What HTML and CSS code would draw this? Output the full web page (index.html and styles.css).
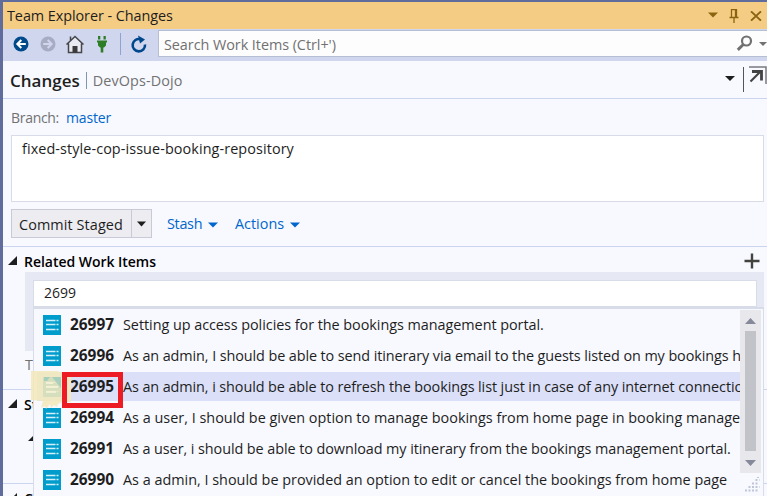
FILE: index.html
```html
<!DOCTYPE html>
<html lang="en">
<head>
<meta charset="utf-8">
<title>Team Explorer - Changes</title>
<link rel="stylesheet" href="styles.css">
</head>
<body>
<svg width="0" height="0" class="defs">
  <symbol id="item" viewBox="0 0 18 20"><rect width="18" height="20" fill="#009ccc"/><path d="M3 5.500h9.500M3 9.500h9.500M3 14.500h9.500" stroke="#d5f0f9" stroke-width="1.400"/><path d="M13.500 5.500h2M13.500 9.500h2M13.500 14.500h2" stroke="#d5f0f9" stroke-width="1.600"/></symbol>
  <symbol id="down" viewBox="0 0 10 6"><path d="M0 .5h10L5 5.500z" fill="currentColor"/></symbol>
  <symbol id="fold" viewBox="0 0 9 9"><path d="M9 0v9H0z" fill="currentColor"/></symbol>
</svg>
<div class="window">
  <header class="titlebar">
    <span class="t-title">Team Explorer - Changes</span>
    <div class="title-icons">
      <svg class="caret" width="10" height="6"><use href="#down"/></svg>
      <svg class="pin" width="10" height="14" viewBox="0 0 10 14"><path d="M2.500 8V.7h5V8M6.500 1v7M.5 8.500h9M5 9v5" fill="none" stroke="#8a6410" stroke-width="1.300"/></svg>
      <svg class="close" width="12" height="10" viewBox="0 0 12 10"><path d="M1 .3l10 9.400M11 .3L1 9.700" stroke="#8a6410" stroke-width="1.800"/></svg>
    </div>
  </header>
  <nav class="toolbar">
    <svg width="145" height="32" viewBox="3 29 145 32">
      <circle cx="21" cy="44" r="7.500" fill="#004a8b"/><path d="M25.800 44h-8M21.300 40l-4 4 4 4" fill="none" stroke="#fff" stroke-width="2"/>
      <circle cx="48" cy="44" r="7.500" fill="#a8acc2"/><path d="M43.200 44h8M47.700 40l4 4-4 4" fill="none" stroke="#cfd6ee" stroke-width="2"/>
      <path d="M68.500 43.500V52.300h13V43.500L75 37.500z" fill="#e9e9f2"/><path d="M68.500 43.500v9h13v-9M66.500 44.500l8.500-8 8.500 8M70.500 40v-3.500" fill="none" stroke="#45454a" stroke-width="1.500"/><path d="M72.500 46h5v6.500h-5z" fill="#3b3b3d"/>
      <path d="M98 36h2.300v3.500H98zM103.500 36h2.300v3.500h-2.300zM97 40.500h10v2h-1v3l-2 2h-.700V52.500h-2.600V47.500H100l-2-2v-3h-1z" fill="#2d7d27"/>
      <path d="M120.500 33v22" stroke="#8fa3cf"/>
      <path d="M140.500 39.200A6.200 6.200 0 1 0 145 44.500" fill="none" stroke="#00488b" stroke-width="2.600"/><path d="M138 35.500l7 4-5 4z" fill="#00488b"/>
    </svg>
    <div class="search">
      <span class="t-search">Search Work Items (Ctrl+')</span>
      <svg width="31" height="26" viewBox="736 31 31 26"><circle cx="746.500" cy="41" r="4.500" fill="none" stroke="#717171" stroke-width="2.200"/><path d="M743.300 44.500l-5.500 5.300" stroke="#717171" stroke-width="3"/><path d="M759 42h8l-4 4z" fill="#717171"/></svg>
    </div>
  </nav>
  <div class="page-head">
    <b class="t-changes">Changes</b><i class="bar"></i><span class="t-dojo">DevOps-Dojo</span>
    <svg class="head-icons" width="43" height="36" viewBox="724 62 43 36"><path d="M725 76h10l-5 5z" fill="#1e1e1e"/><path d="M743.500 67v25" stroke="#555"/><path d="M749 67h17v17" fill="none" stroke="#777a80" stroke-width="1.500"/><path d="M750.500 81.500l10-10" stroke="#424242" stroke-width="2.200"/><path d="M752 71.500h9.500v9" fill="none" stroke="#424242" stroke-width="2.800"/></svg>
  </div>
  <div class="branch"><span class="t-branch">Branch:</span><a class="t-master">master</a></div>
  <div class="message"><span class="t-msg">fixed-style-cop-issue-booking-repository</span></div>
  <div class="actions">
    <div class="commit"><span class="commit-text"><span class="t-commit">Commit Staged</span></span><span class="commit-drop"><svg width="9" height="6" viewBox="0 0 9 6"><path d="M0 .5h9L4.500 5.500z" fill="#1e1e1e"/></svg></span></div>
    <a class="stash"><span class="t-stash">Stash</span><svg width="10" height="6"><use href="#down"/></svg></a>
    <a class="acts"><span class="t-actions">Actions</span><svg width="10" height="6"><use href="#down"/></svg></a>
  </div>
  <section class="related">
    <div class="sec-head"><svg width="9" height="9"><use href="#fold"/></svg><span class="t-related">Related Work Items</span>
      <svg class="plus" width="16" height="16" viewBox="0 0 16 16"><path d="M8 .5v15M.5 8h15" stroke="#42433f" stroke-width="2.400"/></svg></div>
    <div class="panel"><div class="query"><span class="t-query">2699</span></div>
      <div class="popup">
        <ul class="list">
          <li><svg width="18" height="20"><use href="#item"/></svg><b>26997</b><span class="r1">Setting up access policies for the bookings management portal.</span></li>
          <li><svg width="18" height="20"><use href="#item"/></svg><b>26996</b><span class="r2">As an admin, I should be able to send itinerary via email to the guests listed on my bookings h</span></li>
          <li class="selected"><svg width="18" height="20"><use href="#item"/></svg><b>26995</b><span class="r3">As an admin, i should be able to refresh the bookings list just in case of any internet connectio</span></li>
          <li><svg width="18" height="20"><use href="#item"/></svg><b>26994</b><span class="r4">As a user, I should be given option to manage bookings from home page in booking manage</span></li>
          <li><svg width="18" height="20"><use href="#item"/></svg><b>26991</b><span class="r5">As a user, i should be able to download my itinerary from the bookings management portal.</span></li>
          <li><svg width="18" height="20"><use href="#item"/></svg><b>26990</b><span class="r6">As a admin, I should be provided an option to edit or cancel the bookings from home page</span></li>
        </ul>
        <div class="side">
          <div class="scroll"><svg width="11" height="6" viewBox="0 0 11 6"><path d="M0 6h11L5.500 0z" fill="#868999"/></svg><i class="thumb"></i><svg width="11" height="6" viewBox="0 0 11 6"><path d="M0 0h11L5.500 6z" fill="#868999"/></svg></div>
          <svg class="grip" width="15" height="15" viewBox="0 0 15 15"><path d="M0 13.500h14M3.500 10h11M7 6.500h7M10.500 3h4M12 0h2" stroke="#bec5d8" stroke-width="2" stroke-dasharray="2 1.500"/></svg>
        </div>
        <svg class="highlighter" width="42" height="42" viewBox="31 370 42 42"><path d="M31 371h26l14 4v27H62l-4 2-1 3-3-2-3 3-1-4-4 5-1-3-4 2 2-7-12-1z" fill="#f2e7bb" fill-opacity=".88"/><path d="M44 377h6l-3 4h-3zM52 377h9v11z" fill="#9dcdbd" fill-opacity=".85"/><path d="M46 383h7M46 387h12M46 392h10" stroke="#f8f3dc" stroke-width="1.300"/></svg>
        <div class="marker"></div>
      </div>
    </div>
    <div class="hint">T</div>
  </section>
  <section class="staged"><div class="sec-head"><svg width="9" height="9"><use href="#fold"/></svg><span class="t-related">St</span></div><svg class="nested" width="9" height="9"><use href="#fold"/></svg></section>
  <section class="last"><div class="sec-head"><svg width="9" height="9"><use href="#fold"/></svg><span class="t-related">C</span></div></section>
</div>
</body>
</html>
```

FILE: styles.css
```css
* { box-sizing: border-box; }
body { margin: 0; width: 767px; height: 496px; overflow: hidden; font: 14.4px/20px "Open Sans", "Noto Sans", sans-serif; color: #1e1e1e; }
svg { display: block; flex: none; }
.defs { position: absolute; }
span, b, a { white-space: nowrap; }
ul { margin: 0; padding: 0; list-style: none; }
.window { height: 496px; overflow: hidden; border-left: 3px solid #5f6c9c; border-top: 2px solid #5f6c9c; background: #f8f9ff; }
.titlebar { height: 27px; background: #f5cc84; display: flex; align-items: center; justify-content: space-between; padding: 0 5px 0 4px; }
.t-title { letter-spacing: -.06px; }
.title-icons { display: flex; align-items: center; gap: 11px; color: #8a6410; }
.caret { margin-top: -2px; }
.toolbar { height: 32px; background: #cfd6ee; display: flex; }
.search { margin: 1px 0 0 10px; height: 27px; flex: 1; background: #fdfdfe; border: 1px solid #b5bfd4; border-right: 0; display: flex; align-items: center; justify-content: space-between; padding-left: 5px; color: #717171; }
.t-search { letter-spacing: -.05px; padding-top: 2px; }
.page-head { height: 38px; display: flex; align-items: center; border-bottom: 1px solid #ccd5f0; padding-left: 7px; }
.t-changes { font-size: 17px; font-weight: 600; padding-top: 2px; }
.bar { width: 1px; height: 17px; background: #7f97ae; margin: 2px 6px 0; }
.t-dojo { color: #717171; letter-spacing: .12px; padding-top: 3px; }
.head-icons { margin-left: auto; }
.branch { height: 36px; display: flex; align-items: center; padding: 2px 0 0 8px; color: #717171; font-size: 14px; }
.t-branch { width: 55px; letter-spacing: -.3px; }
.t-master { letter-spacing: -.15px; }
a { color: #0066cc; }
.message { margin: 0 3px 0 8px; height: 67px; border: 1px solid #d8dbe8; background: #fff; padding: 3px 10px; }
.t-msg { letter-spacing: .09px; }
.actions { display: flex; height: 44px; padding: 7px 0 0 8px; }
.commit { display: flex; width: 141px; height: 29px; border: 1px solid #c8cad8; background: #ececf1; }
.commit-text { width: 120px; padding: 5px 7px 3px; border-right: 1px solid #c8cad8; letter-spacing: .1px; }
.commit-drop { flex: 1; display: flex; align-items: center; justify-content: center; }
.stash, .acts { display: flex; align-items: center; height: 29px; gap: 6px; }
.stash svg, .acts svg { margin-top: 3px; }
.stash { margin-left: 15px; width: 68px; }
.t-stash { letter-spacing: -.3px; }
.related { border-top: 1px solid #ccd5f0; height: 143px; }
.sec-head { height: 25px; display: flex; align-items: center; padding: 4px 7px 0 5px; }
.sec-head svg:first-child { margin-top: -2px; }
.t-related { margin: 0 0 0 7px; color: #000; font-size: 14px; font-weight: 600; letter-spacing: -.03px; }
.sec-head .plus { margin: -2px 0 0 auto; }
.panel { position: relative; margin: 0 3px 0 22px; height: 79px; background: #e6e9f3; padding: 8px 7px 0 8px; }
.query { height: 27px; background: #fff; border: 1px solid #d8dbe8; padding: 2px 10px; font-size: 14px; }
.popup { position: absolute; left: 8px; top: 35px; width: 731px; height: 200px; background: #f8f9ff; border: 1px solid #d8dbe8; border-top-width: 2px; display: flex; }
.list { width: 706px; overflow: hidden; }
.list li { height: 29px; margin: 0 0 2px 3px; padding-left: 6px; display: flex; align-items: center; }
.list li:first-child { margin-top: 1px; }
.list b { flex: none; width: 62px; padding-left: 9px; font-size: 15.400px; font-weight: 700; }
.list li.selected { background: #dbe0f8; }
.r1 { letter-spacing: -.04px; }
.r2 { letter-spacing: -.09px; }
.r4 { letter-spacing: .01px; }
.r3 { letter-spacing: -.09px; }
.r5 { letter-spacing: -.07px; }
.side { width: 21px; padding-top: 1px; }
.scroll { height: 163px; background: #e8e8ec; display: flex; flex-direction: column; align-items: center; padding: 8px 0 7px; }
.thumb { width: 11px; height: 120px; margin: 7px 0 9px; background: #c2c3c9; }
.grip { margin: 4px 0 0 5px; }
.highlighter { position: absolute; left: -3px; top: 61px; }
.marker { position: absolute; left: 28px; top: 63px; width: 61px; height: 36px; border: 5px solid #ed1c24; }
.hint { color: #717171; padding: 4px 0 0 22px; }
.staged { border-top: 1px solid #ccd5f0; height: 94px; }
.nested { margin: 17px 0 0 25px; }
.last { border-top: 1px solid #ccd5f0; }
```
